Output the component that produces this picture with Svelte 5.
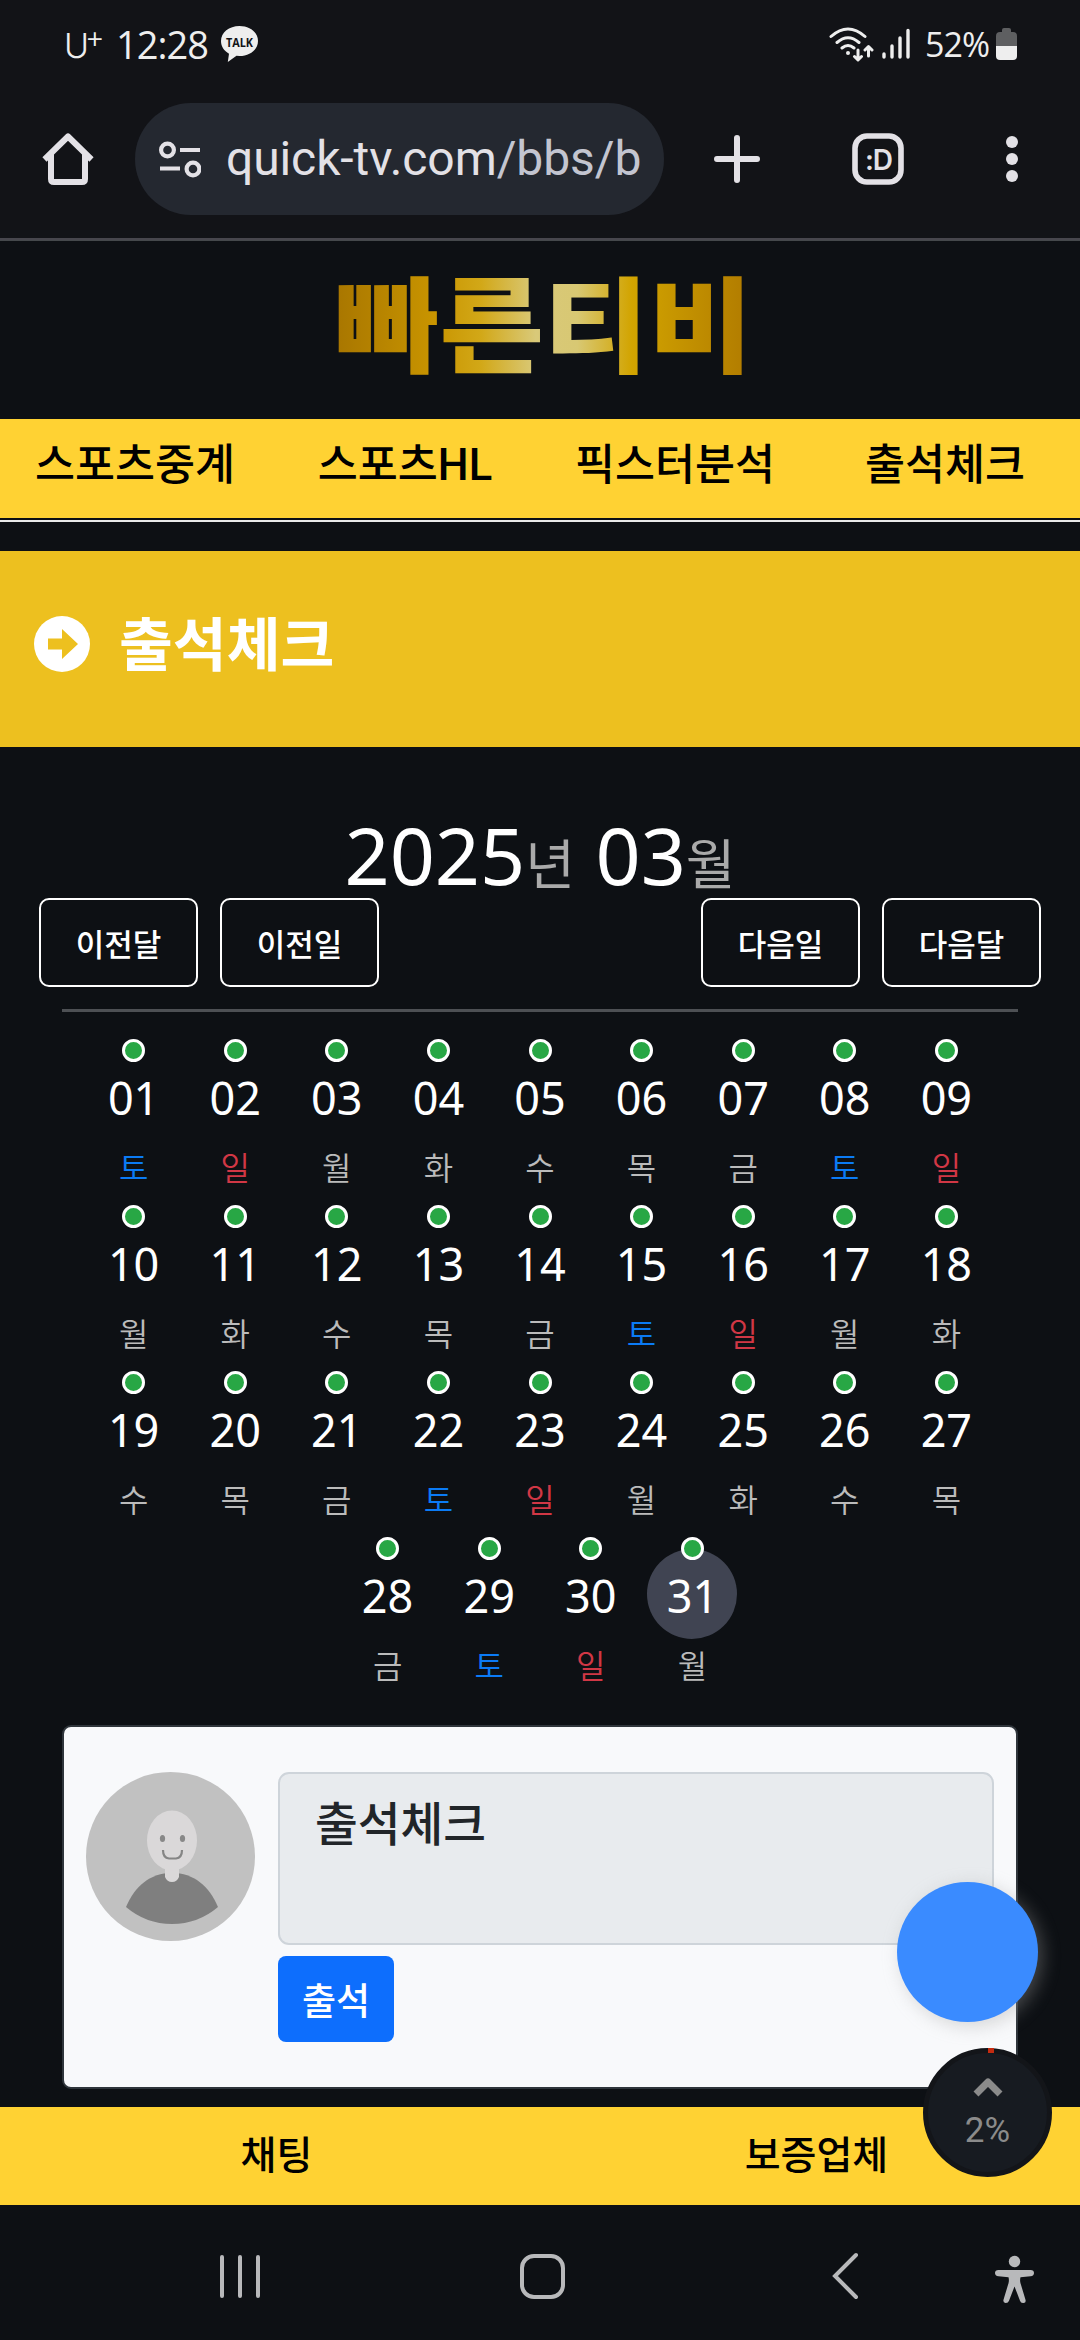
<script lang="ts">
	interface Day {
		num: string;
		name: string;
		tone: 'sat' | 'sun' | 'week';
		today: boolean;
	}

	const menu = ['스포츠중계', '스포츠HL', '픽스터분석', '출석체크'];

	const year = 2025;
	const month = 3;
	const today = 31;
	const weekdays = ['일', '월', '화', '수', '목', '금', '토'];

	const days: Day[] = Array.from({ length: new Date(year, month, 0).getDate() }, (_, i) => {
		const weekday = new Date(year, month - 1, i + 1).getDay();
		return {
			num: String(i + 1).padStart(2, '0'),
			name: weekdays[weekday],
			tone: weekday === 6 ? 'sat' : weekday === 0 ? 'sun' : 'week',
			today: i + 1 === today
		};
	});

	let message = $state('출석체크');
</script>

<div class="screen">
	<div class="status">
		<div class="group">
			<span class="carrier">U<sup>+</sup></span>
			<span class="clock">12:28</span>
			<svg class="talk" width="37" height="37" viewBox="0 0 37 37">
				<path d="M18.500 0C8 0 0 6.500 0 15c0 5.500 3.200 10 8 12.700L6.800 36l8.700-6.200 3 .2C29 30 37 23.500 37 15S29 0 18.500 0Z" fill="#eee" />
				<text x="18.500" y="20.500" text-anchor="middle" textLength="27" lengthAdjust="spacingAndGlyphs">TALK</text>
			</svg>
		</div>
		<div class="group">
			<svg width="45" height="35" viewBox="0 0 45 35" fill="none" stroke="#eee" stroke-width="3" stroke-linecap="round">
				<path d="M2 9.500Q19 -5.500 36 9.500M8 15.500Q19 6 30 15.500M13 21Q19 16 25 21" />
				<circle cx="19" cy="26" r="2" fill="#eee" stroke="none" />
				<path d="M29 23v9M25.500 29.500l3.500 3.500 3.500-3.500M39.500 29V20M36 23l3.500-3.500L43 23" stroke-linejoin="round" />
			</svg>
			<svg class="signal" width="28" height="32" viewBox="0 0 28 32" stroke="#eee" stroke-width="3.400" stroke-linecap="round">
				<path d="M2 26v3M10 18v11M18 10v19M26 2.500V29" />
			</svg>
			<span class="percent">52%</span>
			<svg class="battery" width="21" height="32" viewBox="0 0 21 32">
				<path d="M6 2q0-2 2-2h5q2 0 2 2v2h2q4 0 4 4v10H0V8q0-4 4-4h2Z" fill="#5e5f61" />
				<path d="M0 18h21v10q0 4-4 4H4q-4 0-4-4Z" fill="#eee" />
			</svg>
		</div>
	</div>

	<div class="toolbar">
		<svg class="home" width="52" height="52" viewBox="0 0 52 52" fill="none" stroke="#e3e1e6" stroke-width="6">
			<path d="M9 20v26q0 3 3 3h28q3 0 3-3V20" />
			<path d="M2.500 26.500 26 3.500l23.500 23" stroke-linejoin="round" />
		</svg>
		<div class="url">
			<svg width="42" height="37" viewBox="0 0 42 37" fill="none" stroke="#e3e1e6" stroke-width="4.200">
				<circle cx="8.500" cy="9" r="6.400" />
				<circle cx="34" cy="28" r="6.400" />
				<path d="M21 9h20M1 27.500h20" />
			</svg>
			<span class="address">quick-tv.com<i>/bbs/b</i></span>
		</div>
		<svg class="plus" width="46" height="48" viewBox="0 0 46 48" stroke="#e3e1e6" stroke-width="6" stroke-linecap="round">
			<path d="M23 3v42M3 24h40" />
		</svg>
		<svg class="tabs" width="52" height="52" viewBox="0 0 52 52">
			<rect x="3" y="3" width="46" height="46" rx="12" fill="none" stroke="#e3e1e6" stroke-width="5.600" />
			<text x="26.500" y="36.500" text-anchor="middle">:D</text>
		</svg>
		<svg class="more" width="12" height="48" viewBox="0 0 12 48" fill="#e3e1e6">
			<circle cx="6" cy="7" r="6" />
			<circle cx="6" cy="24" r="6" />
			<circle cx="6" cy="41" r="6" />
		</svg>
	</div>

	<header class="brand">
		<svg width="440" height="170" viewBox="0 0 440 170">
			<defs>
				<linearGradient id="gold">
					<stop offset="0" stop-color="#a87600" />
					<stop offset="0.240" stop-color="#c99500" />
					<stop offset="0.350" stop-color="#d2a818" />
					<stop offset="0.480" stop-color="#d9c979" />
					<stop offset="0.580" stop-color="#d8c873" />
					<stop offset="0.710" stop-color="#d2a400" />
					<stop offset="1" stop-color="#b07a00" />
				</linearGradient>
			</defs>
			<text x="15" y="120" textLength="418" lengthAdjust="spacingAndGlyphs" fill="url(#gold)">빠른티비</text>
		</svg>
	</header>

	<nav class="menu">
		{#each menu as item (item)}
			<a href="#top">{item}</a>
		{/each}
	</nav>

	<div class="page-title">
		<svg width="56" height="56" viewBox="0 0 56 56">
			<circle cx="28" cy="28" r="28" fill="#fff" />
			<path d="M14 22.500h14V13l16 15-16 15v-9.500H14Z" fill="#edc01f" />
		</svg>
		<h1>출석체크</h1>
	</div>

	<main>
		<h2 class="date">{year}<small>년</small> {String(month).padStart(2, '0')}<small>월</small></h2>
		<div class="pager">
			<button>이전달</button>
			<button>이전일</button>
			<span class="spacer"></span>
			<button>다음일</button>
			<button>다음달</button>
		</div>

		<div class="days">
			{#each days as day (day.num)}
				<div class="day" class:today={day.today}>
					<span class="dot"></span>
					<span class="num">{day.num}</span>
					<span class="name {day.tone}">{day.name}</span>
				</div>
			{/each}
		</div>

		<div class="card">
			<svg class="avatar" width="169" height="169" viewBox="0 0 169 169">
				<circle cx="84.500" cy="84.500" r="84.500" fill="#c1c1c1" />
				<path d="M40 135C49 114 64 101 86 101s37 13 46 34q-20 17-46 17t-46-17Z" fill="#7f7f7f" />
				<path d="M79 92h14v13q-2 5-7 5t-7-5Z" fill="#dad8d9" />
				<ellipse cx="86" cy="68.500" rx="25" ry="30" fill="#dad8d9" />
				<ellipse cx="76.500" cy="66.500" rx="2.600" ry="3.500" fill="#888" />
				<ellipse cx="96.500" cy="66.500" rx="2.600" ry="3.500" fill="#888" />
				<path d="M77 78q0 8 6 8.500h7q6-.5 6-8.500" fill="none" stroke="#858585" stroke-width="2.200" />
			</svg>
			<div class="form">
				<textarea readonly bind:value={message}></textarea>
				<button>출석</button>
			</div>
		</div>
	</main>

	<nav class="bottom">
		<a href="#chat">채팅</a>
		<a href="#partners">보증업체</a>
	</nav>

	<div class="system">
		<svg width="1080" height="60" viewBox="0 0 1080 60" fill="none" stroke="#b8b9bb" stroke-width="4" stroke-linecap="round">
			<path d="M222 12v39M240 12v39M258 12v39" />
			<rect x="522" y="11" width="41" height="41" rx="12" />
			<path d="M856 10 835 31 856 52" />
			<g fill="#b8b9bb" stroke="none">
				<circle cx="1014.500" cy="16.500" r="5.700" />
				<path d="M998.500 25h32q3.500 0 3.500 3t-3.500 3.200l-10 1q-.8 3 0 6l5 16.500q.8 3-2 3.300t-3.500-2.300l-5.500-14.200-5.500 14.200q-.8 2.500-3.500 2.300t-2-3.300l5-16.500q.8-3 0-6l-10-1q-3.500-.2-3.500-3.200t3.500-3Z" />
			</g>
		</svg>
	</div>

	<div class="chat-bubble"></div>
	<div class="to-top">
		<svg width="30" height="20" viewBox="0 0 30 20" fill="none" stroke="#8b8b8b" stroke-width="7" stroke-linejoin="round">
			<path d="M3 17 15 5l12 12" />
		</svg>
		<span>2%</span>
		<i class="mark"></i>
	</div>
</div>

<style>
	:global(body) {
		margin: 0;
		background: #0d1014;
	}

	.screen {
		position: relative;
		display: flex;
		flex-direction: column;
		width: 1080px;
		height: 2340px;
		overflow: hidden;
		background: #0d1014;
		color: #fff;
		font-family: 'Noto Sans', 'Noto Sans CJK KR', sans-serif;
	}

	a {
		color: #000;
		text-decoration: none;
	}

	button {
		font: inherit;
		color: #fff;
		background: none;
		padding: 0;
	}

	.status {
		display: flex;
		justify-content: space-between;
		height: 88px;
		padding: 0 63px 0 64px;
		box-sizing: border-box;
		background: #121317;
		color: #eee;
	}

	.group {
		display: flex;
		align-items: center;
	}

	.carrier {
		width: 52px;
		padding-top: 4px;
		font: 300 34px/1 Inter, sans-serif;
		white-space: nowrap;
	}

	.carrier sup {
		margin-left: -4px;
		font-size: 30px;
		line-height: 0;
		vertical-align: 10px;
	}

	.clock {
		width: 105px;
		font: 500 38px/1 'Open Sans', sans-serif;
		letter-spacing: -1px;
	}

	.talk text {
		font: 700 13px 'Open Sans', sans-serif;
		fill: #121317;
	}

	.signal {
		margin: 0 15px 0 8px;
	}

	.percent {
		width: 71px;
		font: 400 34px/1 'Open Sans', sans-serif;
		letter-spacing: -1px;
	}

	.toolbar {
		display: flex;
		align-items: center;
		height: 152px;
		padding: 0 62px 8px 42px;
		box-sizing: border-box;
		border-bottom: 2px solid #47464d;
		background: #121317;
	}

	.url {
		display: flex;
		align-items: center;
		gap: 25px;
		width: 529px;
		height: 112px;
		margin-left: 41px;
		padding-left: 24px;
		box-sizing: border-box;
		border-radius: 56px;
		background: #242830;
	}

	.address {
		font: 400 48px/1.300 Roboto, sans-serif;
		letter-spacing: -0.100px;
		color: #e3e1e6;
	}

	.address i {
		font-style: normal;
		color: #c3c5d0;
	}

	.plus {
		margin-left: 50px;
	}

	.tabs {
		margin-left: 92px;
	}

	.tabs text {
		font: 600 28px Inter, sans-serif;
		letter-spacing: -1px;
		fill: #e3e1e6;
	}

	.more {
		margin-left: auto;
	}

	.brand {
		display: flex;
		justify-content: center;
		align-items: center;
		height: 179px;
		box-sizing: border-box;
		border-top: 1px solid #44484b;
	}

	.brand text {
		font: 900 104px 'Noto Sans CJK KR', sans-serif;
	}

	.menu {
		display: grid;
		grid-template-columns: repeat(4, 1fr);
		height: 99px;
		background: #ffd233;
		font: 500 43.500px/94px Roboto, 'Noto Sans CJK KR', sans-serif;
		text-align: center;
		box-shadow: 0 2px #0d1014, 0 4px #e9eaea;
	}

	.page-title {
		display: flex;
		align-items: center;
		gap: 29px;
		height: 196px;
		margin-top: 33px;
		padding: 0 34px 11px;
		box-sizing: border-box;
		background: #edc01f;
	}

	h1 {
		margin: 0;
		font-size: 58.500px;
		line-height: 1;
		font-weight: 700;
	}

	main {
		display: flex;
		flex-direction: column;
		height: 1360px;
	}

	.date {
		margin: 65px 0 0;
		height: 86px;
		text-align: center;
		font-size: 79px;
		line-height: 86px;
		font-weight: 400;
	}

	small {
		font-size: 54px;
		font-weight: 400;
		color: #aaa;
	}

	.pager {
		display: flex;
		gap: 22px;
		height: 89px;
		padding: 0 39px;
	}

	.spacer {
		flex: 1;
	}

	.pager button {
		width: 159px;
		border: 2px solid #fff;
		border-radius: 10px;
		font-size: 31px;
		font-weight: 500;
	}

	.days {
		display: flex;
		flex-wrap: wrap;
		justify-content: center;
		margin: 22px 62px 0;
		padding: 27px 20px 0;
		border-top: 3px solid #4d5054;
	}

	.day {
		display: flex;
		flex-direction: column;
		align-items: center;
		width: 101.600px;
		height: 166px;
	}

	.dot {
		width: 17px;
		height: 17px;
		border: 3px solid #fff;
		border-radius: 50%;
		background: #28a745;
		z-index: 1;
	}

	.num {
		display: grid;
		place-items: center;
		width: 90px;
		height: 90px;
		margin-top: -11px;
		padding-top: 3px;
		box-sizing: border-box;
		border-radius: 50%;
		font-size: 45px;
		line-height: 1;
	}

	.today .num {
		background: #404452;
	}

	.name {
		margin-top: 5px;
		font-size: 32px;
		line-height: 44px;
		font-weight: 350;
		color: #bbb;
	}

	.name.sat {
		color: #0b7bf5;
	}

	.name.sun {
		color: #d13745;
	}

	.card {
		display: flex;
		gap: 23px;
		height: 364px;
		margin: 22px 62px 0;
		padding: 45px 22px;
		box-sizing: border-box;
		border: 2px solid #2f353b;
		border-radius: 9px;
		background: #f8f9fb;
	}

	.avatar {
		flex: none;
	}

	.form {
		flex: 1;
		display: flex;
		flex-direction: column;
		align-items: flex-start;
		gap: 11px;
	}

	textarea {
		width: 100%;
		height: 173px;
		padding: 14px 35px;
		box-sizing: border-box;
		border: 2px solid #ced4da;
		border-radius: 11px;
		outline: none;
		resize: none;
		background: #e8ebee;
		color: #212529;
		font: 500 46.500px/70px 'Noto Sans', 'Noto Sans CJK KR', sans-serif;
	}

	.form button {
		width: 116px;
		height: 86px;
		border: 0;
		border-radius: 8px;
		background: #0d6efd;
		font-size: 37px;
		font-weight: 500;
	}

	.bottom {
		display: grid;
		grid-template-columns: 553px 527px;
		height: 98px;
		background: #ffd233;
		font-size: 39px;
		line-height: 94px;
		font-weight: 500;
		text-align: center;
	}

	.system {
		padding-top: 40px;
	}

	.chat-bubble {
		position: absolute;
		left: 897px;
		top: 1882px;
		width: 141px;
		height: 140px;
		border-radius: 50%;
		background: #3a8bff;
		box-shadow: 4px 4px 18px rgba(160, 160, 160, 0.400);
	}

	.to-top {
		position: absolute;
		left: 923px;
		top: 2048px;
		display: flex;
		flex-direction: column;
		align-items: center;
		gap: 16px;
		width: 129px;
		height: 129px;
		padding-top: 24px;
		box-sizing: border-box;
		border: 5px solid #131519;
		border-radius: 50%;
		background: #171b21;
		color: #8b8b8b;
		font: 400 35px/1 Roboto, sans-serif;
	}

	.mark {
		position: absolute;
		left: 60px;
		top: -5px;
		width: 6px;
		height: 5px;
		background: #c42b10;
	}
</style>
